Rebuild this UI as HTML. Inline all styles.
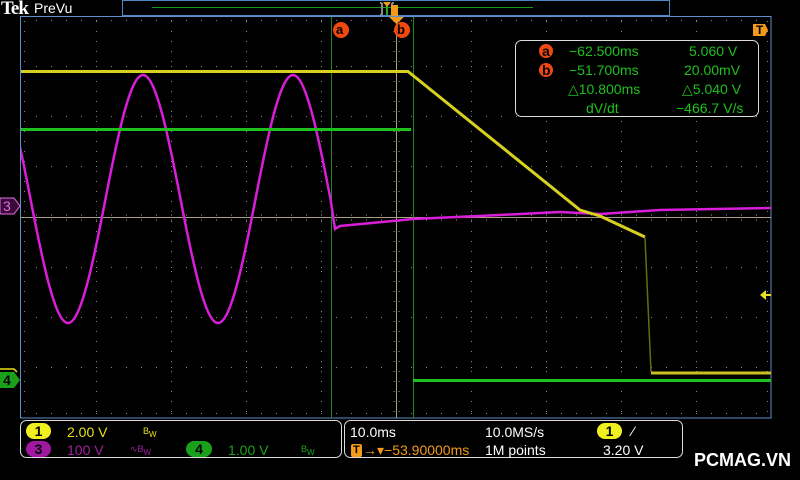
<!DOCTYPE html>
<html><head><meta charset="utf-8"><style>
body{margin:0;background:#000;width:800px;height:480px;overflow:hidden;position:relative;font-family:"Liberation Sans",sans-serif}
.t{position:absolute;font-size:14px;white-space:nowrap;line-height:14px}
.b{position:absolute;border-radius:8px;font-size:14px;font-weight:bold;text-align:center;color:#000;line-height:16px;height:16px}
</style></head><body>
<svg width="800" height="480" style="position:absolute;left:0;top:0">
<defs><clipPath id="c"><rect x="21" y="16" width="750" height="402"/></clipPath></defs>
<rect x="122.5" y="0.5" width="547" height="15" fill="none" stroke="#4a86c8"/>
<line x1="152" y1="7.5" x2="533" y2="7.5" stroke="#1a9a1a"/>
<path d="M382 3 V15 M382 3 h-2 M382 15h-2 M392 3V15 M392 3h2 M392 15h2" stroke="#888" stroke-width="2" fill="none"/>
<line x1="387" y1="3" x2="387" y2="15" stroke="#1ab01a" stroke-width="2"/>
<path d="M383 2 h8 l-4 5z" fill="#f29a1c"/>
<rect x="391" y="5" width="7" height="11" fill="#f29a1c"/>
<rect x="20.5" y="16.5" width="750.5" height="401.5" fill="none" stroke="#5f8fc8"/>
<g stroke="#8a8a8a" stroke-width="1">
<g stroke-dasharray="1 9">
<line x1="96.5" y1="21" x2="96.5" y2="418"/><line x1="171.5" y1="21" x2="171.5" y2="418"/><line x1="246.5" y1="21" x2="246.5" y2="418"/><line x1="321.5" y1="21" x2="321.5" y2="418"/><line x1="471.5" y1="21" x2="471.5" y2="418"/><line x1="546.5" y1="21" x2="546.5" y2="418"/><line x1="621.5" y1="21" x2="621.5" y2="418"/><line x1="696.5" y1="21" x2="696.5" y2="418"/>
</g>
<g stroke-dasharray="1 14">
<line x1="36" y1="66.5" x2="771" y2="66.5"/><line x1="36" y1="116.5" x2="771" y2="116.5"/><line x1="36" y1="166.5" x2="771" y2="166.5"/><line x1="36" y1="267.5" x2="771" y2="267.5"/><line x1="36" y1="317.5" x2="771" y2="317.5"/><line x1="36" y1="367.5" x2="771" y2="367.5"/>
<line x1="36" y1="20.5" x2="771" y2="20.5"/><line x1="36" y1="413.5" x2="771" y2="413.5"/>
</g>
<g stroke-dasharray="1 9"><line x1="24.5" y1="21" x2="24.5" y2="418"/><line x1="767.5" y1="21" x2="767.5" y2="418"/></g>
</g>
<line x1="21" y1="217.5" x2="771" y2="217.5" stroke="#a89f80"/>
<line x1="396.5" y1="17" x2="396.5" y2="418" stroke="#a89f80"/>
<g stroke="#a89f80" stroke-dasharray="1 14"><line x1="36" y1="215" x2="771" y2="215"/><line x1="36" y1="220" x2="771" y2="220"/></g>
<g stroke="#a89f80" stroke-dasharray="1 9"><line x1="394" y1="21" x2="394" y2="418"/><line x1="399" y1="21" x2="399" y2="418"/></g>
<line x1="331.5" y1="17" x2="331.5" y2="418" stroke="#1a8a1a"/>
<line x1="413.5" y1="17" x2="413.5" y2="418" stroke="#1a8a1a"/>
<path d="M389 17 h15 l-7.5 7z" fill="#f29a1c"/>
<g clip-path="url(#c)">
<path d="M-7 75 c12.76 0 25.27 60.5 37.5 124 c12.23 63.5 24.74 124 37.5 124 c12.76 0 25.27 -60.5 37.5 -124 c12.23 -63.5 24.74 -124 37.5 -124 c12.76 0 25.27 60.5 37.5 124 c12.23 63.5 24.74 124 37.5 124 c12.76 0 25.27 -60.5 37.5 -124 c12.23 -63.5 24.74 -124 37.5 -124 c12.76 0 25.27 60.5 37.5 124 L335 229 L340 226 L413 219 L500 215 L560 212 L600 214 L660 210 L771 208" fill="none" stroke="#d81ed8" stroke-width="2.5"/>
<path d="M20 71.5 H408 L580 210 L600 216 L645 237" fill="none" stroke="#d8d020" stroke-width="3"/>
<path d="M645 238 L651 372" stroke="#6a6a10" stroke-width="1.5"/>
<line x1="651" y1="373" x2="771" y2="373" stroke="#c8c020" stroke-width="3"/>
<line x1="20" y1="129.5" x2="411" y2="129.5" stroke="#1ec01e" stroke-width="3"/>
<line x1="413" y1="380.5" x2="771" y2="380.5" stroke="#1ec01e" stroke-width="3"/>
</g>
<circle cx="341" cy="30" r="8" fill="#f04810"/><circle cx="402" cy="30" r="8" fill="#f04810"/>
<path d="M753 24 h12 l3 6 l-3 6 h-12z" fill="#f29a1c"/>
<path d="M0 198 h14 l6 8 l-6 8 h-14z" fill="#3a0a3a" stroke="#e070e0"/>
<path d="M0 372 h14 l6 8 l-6 8 h-14z" fill="#1aa01a"/>
<path d="M0 369 h14 l3 3" stroke="#e8e020" stroke-width="1.5" fill="none"/>
<path d="M760 295 l6 -5 v4 h5 v2 h-5 v4z" fill="#e8e020"/>
<rect x="515.5" y="40.5" width="243" height="76" rx="6" fill="#000" stroke="#ddd"/>
<circle cx="546" cy="51" r="7" fill="#f04810"/><circle cx="546" cy="70" r="7" fill="#f04810"/>
<rect x="20.5" y="420.5" width="321" height="37" rx="6" fill="none" stroke="#ddd"/>
<rect x="344.5" y="420.5" width="338" height="37" rx="6" fill="none" stroke="#ddd"/>
<rect x="351" y="444" width="11" height="13" rx="2" fill="#f29a1c"/>
</svg>
<div class="t" style="left:1px;top:0;font-size:19px;line-height:18px;font-weight:bold;color:#fff;font-family:'Liberation Serif',serif;letter-spacing:-1px">Tek</div>
<div class="t" style="left:34px;top:1px;color:#fff;font-size:14px">PreVu</div>
<div class="t" style="left:336px;top:23px;color:#000;font-weight:bold;font-size:13px">a</div>
<div class="t" style="left:397px;top:23px;color:#000;font-weight:bold;font-size:13px">b</div>
<div class="t" style="left:756px;top:23px;color:#000;font-weight:bold;font-size:12px">T</div>
<div class="t" style="left:3px;top:199px;color:#e070e0;font-size:14px">3</div>
<div class="t" style="left:3px;top:373px;color:#000;font-size:14px;font-weight:bold">4</div>
<div class="t" style="left:542px;top:44px;color:#000;font-weight:bold">a</div>
<div class="t" style="left:542px;top:63px;color:#000;font-weight:bold">b</div>
<div class="t" style="color:#1ec01e;left:569px;top:44px">−62.500ms</div>
<div class="t" style="color:#1ec01e;left:689px;top:44px">5.060 V</div>
<div class="t" style="color:#1ec01e;left:684px;top:63px">20.00mV</div>
<div class="t" style="color:#1ec01e;left:569px;top:63px">−51.700ms</div>
<div class="t" style="color:#1ec01e;left:568px;top:82px">△10.800ms</div>
<div class="t" style="color:#1ec01e;left:682px;top:82px">△5.040 V</div>
<div class="t" style="color:#1ec01e;left:586px;top:101px">dV/dt</div>
<div class="t" style="color:#1ec01e;left:676px;top:101px">−466.7 V/s</div>
<div class="b" style="left:26px;top:423px;width:25px;background:#f0f020">1</div>
<div class="t" style="left:67px;top:425px;color:#e8e020">2.00 V</div>
<div class="t" style="left:143px;top:424px;color:#e8e020;font-size:9px">B<sub style="font-size:8px">W</sub></div>
<div class="b" style="left:26px;top:441px;width:25px;background:#a018a0">3</div>
<div class="t" style="left:67px;top:443px;color:#a020a0">100 V</div>
<div class="t" style="left:130px;top:442px;color:#a020a0;font-size:9px">∿B<sub style="font-size:8px">W</sub></div>
<div class="b" style="left:186px;top:441px;width:26px;background:#1aa01a">4</div>
<div class="t" style="left:228px;top:443px;color:#1aa01a">1.00 V</div>
<div class="t" style="left:301px;top:442px;color:#1aa01a;font-size:9px">B<sub style="font-size:8px">W</sub></div>
<div class="t" style="left:350px;top:425px;color:#fff">10.0ms</div>
<div class="t" style="left:485px;top:425px;color:#fff">10.0MS/s</div>
<div class="b" style="left:597px;top:423px;width:25px;background:#f0f020">1</div>
<div class="t" style="left:632px;top:424px;color:#fff">⁄</div>
<div class="t" style="left:353px;top:443px;color:#000;font-weight:bold;font-size:11px">T</div>
<div class="t" style="left:363px;top:443px;color:#f29a1c">→▾−53.90000ms</div>
<div class="t" style="left:485px;top:443px;color:#fff">1M points</div>
<div class="t" style="left:603px;top:443px;color:#fff">3.20 V</div>
<div class="t" style="left:694px;top:451px;color:#fff;font-weight:bold;font-size:18px;line-height:18px">PCMAG.VN</div>
</body></html>
